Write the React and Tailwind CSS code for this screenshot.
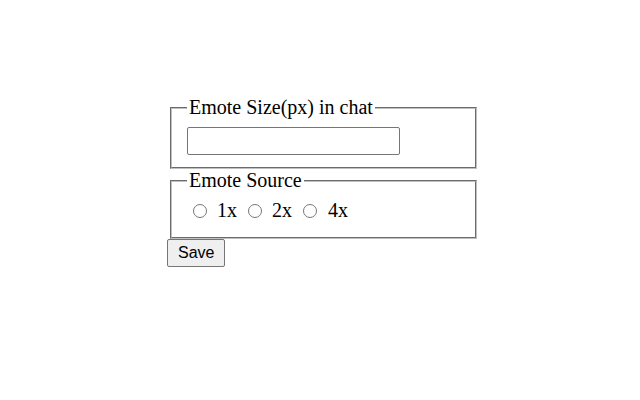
export default function App() {
  return (
    <div className="min-h-[400px] bg-white pt-[96px] pl-[167px] font-['Liberation_Serif',serif] text-[20px] text-black">
      <div className="w-[312px]">
        <fieldset className="ml-[3px] mr-[2px] border-2 [border-style:groove] border-[#c0c0c0] px-[15px] pt-[8px] pb-[12px]">
          <legend className="px-[2px] leading-[23px]">Emote Size(px) in chat</legend>
          <input
            type="text"
            className="block w-[213px] h-[28px] border border-[#767676] rounded-[2px] px-[2px] bg-white outline-none"
          />
        </fieldset>
        <fieldset className="ml-[3px] mr-[2px] border-2 [border-style:groove] border-[#c0c0c0] px-[15px] pt-[7px] pb-[15px]">
          <legend className="px-[2px] leading-[23px]">Emote Source</legend>
          <div className="flex items-center h-[23px] leading-[23px]">
            <input type="radio" name="src" className="m-0 ml-[6px] w-[14px] h-[14px]" />
            <span className="ml-[10px] w-[21px]">1x</span>
            <input type="radio" name="src" className="m-0 ml-[10px] w-[14px] h-[14px]" />
            <span className="ml-[10px] w-[21px]">2x</span>
            <input type="radio" name="src" className="m-0 ml-[10px] w-[14px] h-[14px]" />
            <span className="ml-[11px]">4x</span>
          </div>
        </fieldset>
        <button className="block h-[28px] px-[10px] border border-[#767676] rounded-[2px] bg-[#efefef] font-['Liberation_Sans',Arial,sans-serif] text-[16px] leading-none text-black">
          Save
        </button>
      </div>
    </div>
  )
}
